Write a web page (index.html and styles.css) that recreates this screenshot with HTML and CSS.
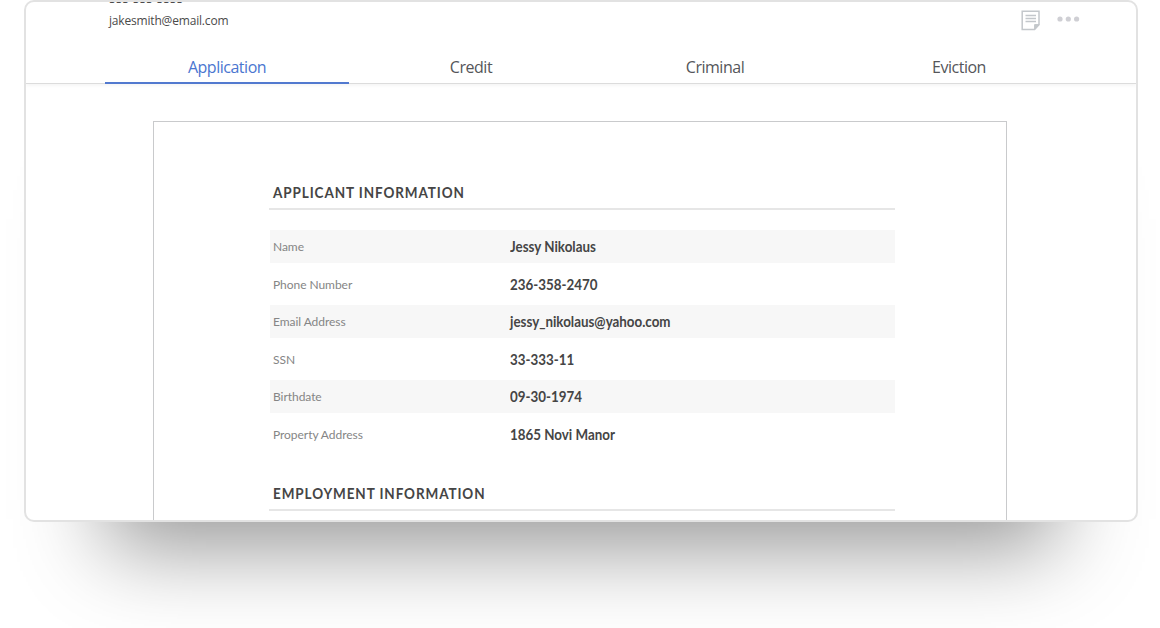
FILE: index.html
```
<!DOCTYPE html>
<html lang="en">
<head>
<meta charset="utf-8">
<title>Applicant report</title>
<link rel="stylesheet" href="styles.css">
</head>
<body>
<main class="card">
  <header class="profile">
    <div class="contact">
      <div>555-555-5555</div>
      <div>jakesmith@email.com</div>
    </div>
    <div class="actions">
      <svg class="note" width="20" height="21" viewBox="0 0 20 21" fill="none" stroke="#c3c7cb">
        <path d="M1.2 1.2H18V14.6L13.6 19.4H1.2Z" stroke-width="1.5"/>
        <path d="M18 14.6H13.6V19.4Z" fill="#c3c7cb" stroke-width="1"/>
        <path d="M4.5 5.5H15M4.5 8.5H15M4.5 11.5H15" stroke-width="1.3"/>
      </svg>
      <svg class="more" width="24" height="6" viewBox="0 0 24 6" fill="#cfcfd4">
        <circle cx="3" cy="3" r="2.6"/><circle cx="11.3" cy="3" r="2.6"/><circle cx="19.6" cy="3" r="2.6"/>
      </svg>
    </div>
  </header>
  <nav class="tabs">
    <div class="tab active">Application</div>
    <div class="tab">Credit</div>
    <div class="tab">Criminal</div>
    <div class="tab">Eviction</div>
  </nav>
  <section class="sheet">
    <h2 class="heading"><span>APPLICANT INFORMATION</span></h2>
    <dl class="rows">
      <div class="row"><dt>Name</dt><dd>Jessy Nikolaus</dd></div>
      <div class="row"><dt>Phone Number</dt><dd>236-358-2470</dd></div>
      <div class="row"><dt>Email Address</dt><dd>jessy_nikolaus@yahoo.com</dd></div>
      <div class="row"><dt>SSN</dt><dd>33-333-11</dd></div>
      <div class="row"><dt>Birthdate</dt><dd>09-30-1974</dd></div>
      <div class="row"><dt>Property Address</dt><dd>1865 Novi Manor</dd></div>
    </dl>
    <h2 class="heading"><span>EMPLOYMENT INFORMATION</span></h2>
  </section>
</main>
</body>
</html>
```
FILE: styles.css
```
* { box-sizing: border-box; }
body {
  margin: 0;
  height: 628px;
  overflow: hidden;
  background: #fff;
  font-family: "Open Sans", sans-serif;
}
.card {
  width: 1114px;
  height: 522px;
  margin-left: 24px;
  border: 2px solid #e2e2e2;
  border-radius: 10px;
  background: #fff;
  overflow: hidden;
  box-shadow: 0 108px 82px -82px rgba(0, 0, 0, 0.41);
}
.profile {
  display: flex;
  justify-content: space-between;
  height: 51px;
  padding: 0 55px 0 83px;
}
.contact {
  margin-top: -14px;
  font-size: 12px;
  line-height: 22px;
  letter-spacing: -0.18px;
  color: #4a4a4a;
}
.actions { display: flex; align-items: flex-start; gap: 16px; padding-top: 8px; }
.more { margin-top: 6px; }
.tabs {
  display: grid;
  grid-template-columns: repeat(4, 244px);
  height: 31px;
  padding-left: 79px;
  border-bottom: 1px solid #dcdcdc;
  box-shadow: 0 2px 3px rgba(0, 0, 0, 0.04);
}
.tab {
  height: 31px;
  font-size: 16px;
  line-height: 29px;
  letter-spacing: -0.48px;
  text-align: center;
  color: #55565a;
}
.active { color: #4a76d0; border-bottom: 2px solid #5279cf; }
.sheet {
  width: 854px;
  height: 420px;
  margin: 37px 0 0 127px;
  padding: 62px 111px 0 115px;
  border: 1px solid #c9cacc;
  font-family: Lato, sans-serif;
}
.heading {
  height: 26px;
  margin: 0;
  padding-left: 4px;
  border-bottom: 2px solid #e6e6e6;
  font-size: 15px;
  line-height: 17px;
  font-weight: 700;
  letter-spacing: 1px;
  color: #454545;
}
.heading span {
  display: inline-block;
  transform: scaleX(0.9);
  transform-origin: left;
}
.rows { margin: 20.4px 0 0 1px; height: 255px; }
.row {
  display: grid;
  grid-template-columns: 237px 1fr;
  height: 33px;
  margin-bottom: 4.5px;
  padding-left: 3px;
  line-height: 33px;
}
.row:nth-child(odd) { background: #f7f7f7; }
dt { font-size: 12px; letter-spacing: -0.05px; color: #858585; }
dd {
  margin: 0;
  font-size: 15px;
  line-height: 32px;
  font-weight: 700;
  color: #454545;
  transform: scaleX(0.891);
  transform-origin: left;
}
```
